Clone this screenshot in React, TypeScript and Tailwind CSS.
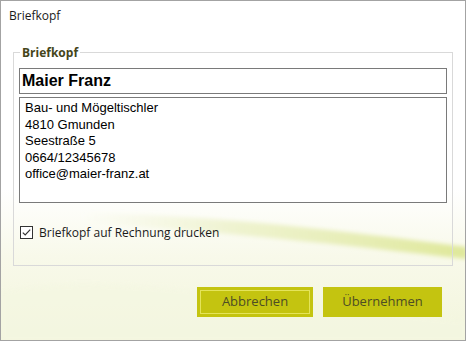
export default function App() {
  return (
    <div className="relative w-[466px] h-[341px] overflow-hidden border border-[#a3a3a3] bg-white font-['Open_Sans',sans-serif] text-[#1a1a1a]">
      {/* background swoosh */}
      <svg className="absolute inset-0 pointer-events-none" width="466" height="341" viewBox="0 0 466 341">
        <defs>
          <linearGradient id="bg" x1="0" y1="0" x2="0" y2="1">
            <stop offset="0" stopColor="#ffffff" />
            <stop offset="0.55" stopColor="#ffffff" />
            <stop offset="0.75" stopColor="#f8f9ea" />
            <stop offset="1" stopColor="#f2f5dc" />
          </linearGradient>
          <linearGradient id="band" x1="0" y1="0" x2="1" y2="0">
            <stop offset="0" stopColor="#eef2cf" stopOpacity="0" />
            <stop offset="0.4" stopColor="#e9efc0" stopOpacity="0.7" />
            <stop offset="1" stopColor="#dfe89a" stopOpacity="1" />
          </linearGradient>
          <filter id="blur">
            <feGaussianBlur stdDeviation="2" />
          </filter>
        </defs>
        <rect width="466" height="341" fill="url(#bg)" />
        <path d="M80 212 C 220 214, 340 230, 466 246 L 466 258 C 340 244, 220 230, 80 222 Z" fill="url(#band)" filter="url(#blur)" />
        <path d="M0 290 C 120 270, 260 300, 466 320 L 466 341 L 0 341 Z" fill="#f4f7e2" opacity="0.7" filter="url(#blur)" />
      </svg>

      <div className="relative flex flex-col h-full">
        <div className="h-[30px] pl-[8px] pt-[6px] text-[12px] leading-[17px]">Briefkopf</div>

        <fieldset className="mx-[12px] mt-[13px] h-[222px] border border-[#d9d9d9] px-[5px] pb-[8px]">
          <legend className="ml-[1px] px-[2px] text-[12px] leading-[17px] font-bold text-[#45451a]">Briefkopf</legend>

          <div className="mt-[7px] h-[26px] border border-[#7a7a7a] bg-white pl-[2px] flex items-center font-['Liberation_Sans',Arial,sans-serif] text-[16px] font-bold text-black">
            Maier Franz
          </div>

          <div className="mt-[3px] h-[106px] border border-[#7a7a7a] bg-white pl-[5px] pt-[2px] font-['Liberation_Sans',Arial,sans-serif] text-[13px] leading-[16.5px] text-black">
            <div>Bau- und Mögeltischler</div>
            <div>4810 Gmunden</div>
            <div>Seestraße 5</div>
            <div>0664/12345678</div>
            <div>office@maier-franz.at</div>
          </div>

          <div className="mt-[21px] flex items-center gap-[6px] pl-[1px]">
            <svg width="13" height="13" viewBox="0 0 13 13">
              <rect x="0.5" y="0.5" width="12" height="12" fill="white" stroke="#333" />
              <path d="M2.8 6.6 L5.2 9 L10.2 3.6" fill="none" stroke="#333" strokeWidth="1.2" />
            </svg>
            <span className="text-[12px] leading-[17px]">Briefkopf auf Rechnung drucken</span>
          </div>
        </fieldset>

        <div className="mt-[21px] flex justify-end gap-[10px] pr-[23px]">
          <button className="w-[116px] h-[30px] bg-[#c4c410] p-[3px] text-[13px] text-[#4d4d24]">
            <div className="h-full w-full border border-[#e4e45a] flex items-center justify-center">Abbrechen</div>
          </button>
          <button className="w-[119px] h-[30px] bg-[#c4c410] text-[13px] text-[#4d4d24] flex items-center justify-center">
            Übernehmen
          </button>
        </div>
      </div>
    </div>
  );
}
